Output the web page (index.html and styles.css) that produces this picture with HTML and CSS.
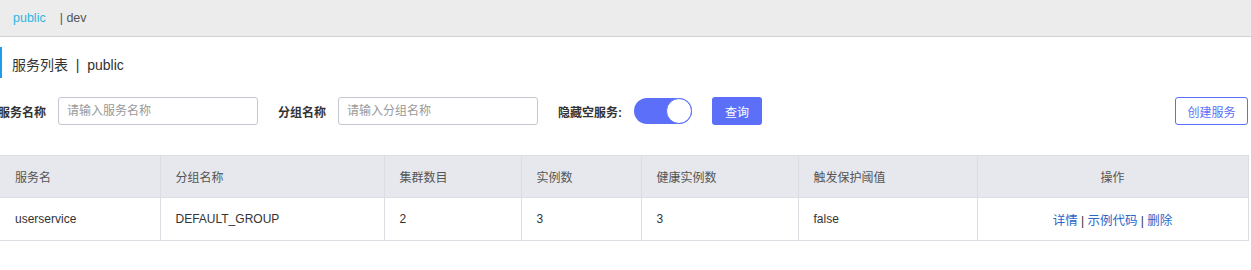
FILE: index.html
```html
<!DOCTYPE html>
<html>
<head>
    <title>服务列表</title>
    <link rel="stylesheet" href="styles.css">
</head>
<body>
    <div class="topbar">
        <span class="ns active">public</span>
        <span class="ns">| dev</span>
    </div>

    <div class="page">
        <h1 class="page-title">服务列表 &nbsp;|&nbsp; public</h1>

        <div class="filters">
            <label class="flabel first">服务名称</label>
            <input class="finput" type="text" placeholder="请输入服务名称">
            <label class="flabel ml">分组名称</label>
            <input class="finput" type="text" placeholder="请输入分组名称">
            <label class="flabel ml">隐藏空服务:</label>
            <div class="switch"><span class="knob"></span></div>
            <button class="btn-primary">查询</button>
            <div class="spacer"></div>
            <button class="btn-outline">创建服务</button>
        </div>

        <table class="grid">
            <colgroup>
                <col style="width:160px">
                <col style="width:224px">
                <col style="width:137px">
                <col style="width:120px">
                <col style="width:157px">
                <col style="width:179px">
                <col style="width:271px">
            </colgroup>
            <thead>
                <tr>
                    <th>服务名</th>
                    <th>分组名称</th>
                    <th>集群数目</th>
                    <th>实例数</th>
                    <th>健康实例数</th>
                    <th>触发保护阈值</th>
                    <th class="center">操作</th>
                </tr>
            </thead>
            <tbody>
                <tr>
                    <td>userservice</td>
                    <td>DEFAULT_GROUP</td>
                    <td>2</td>
                    <td>3</td>
                    <td>3</td>
                    <td>false</td>
                    <td class="center">
                        <a href="#">详情</a> <span class="sep">|</span> <a href="#">示例代码</a> <span class="sep">|</span> <a href="#">删除</a>
                    </td>
                </tr>
            </tbody>
        </table>
    </div>
</body>
</html>
```

FILE: styles.css
```css
body { margin: 0; font-family: "Liberation Sans", "Noto Sans CJK SC", sans-serif; color: #333; background: #fff; }

.topbar { height: 37px; background: #ececec; border-bottom: 1px solid #d3d3d3; box-sizing: border-box; display: flex; align-items: center; padding-left: 13px; font-size: 12.5px; }
.ns { color: #555; margin-right: 14px; }
.ns.active { color: #2fb5e0; }

.page { width: 1248px; }
.page-title { margin: 10px 0 0; height: 25px; padding-top: 6px; line-height: 25px; border-left: 2px solid #1e9bea; padding-left: 10px; font-size: 14px; font-weight: normal; color: #333; }

.filters { display: flex; align-items: center; margin-top: 19px; height: 28px; }
.flabel { font-size: 12px; font-weight: bold; color: #333; margin-right: 12px; white-space: nowrap; }
.flabel.first { margin-left: -2px; }
.flabel.ml { margin-left: 20px; }
.finput { width: 200px; height: 28px; box-sizing: border-box; border: 1px solid #c4c6cf; border-radius: 3px; padding: 0 8px; font-size: 12px; font-family: inherit; }
.finput::placeholder { color: #999; }

.switch { width: 58px; height: 26px; background: #5b6ff8; border-radius: 13px; position: relative; flex-shrink: 0; }
.knob { position: absolute; right: 0; top: 0; width: 24px; height: 24px; border-radius: 50%; background: #fff; border: 1px solid #5b6ff8; }

.btn-primary { margin-left: 20px; width: 50px; height: 28px; background: #5b6ff8; color: #fff; border: none; border-radius: 3px; font-size: 12px; font-family: inherit; }
.spacer { flex: 1; }
.btn-outline { width: 73px; height: 28px; background: #fff; color: #5b6ff8; border: 1px solid #5b6ff8; border-radius: 3px; font-size: 12px; font-family: inherit; }

.grid { width: 1248px; border-collapse: collapse; table-layout: fixed; margin-top: 30px; font-size: 12px; }
.grid th, .grid td { border: 1px solid #dcdde2; padding: 0 15px; text-align: left; }
.grid th:first-child, .grid td:first-child { border-left: none; }
.grid th { height: 41px; background: #e6e8ed; font-weight: normal; color: #555; }
.grid td { height: 42px; color: #333; }
.grid .center { text-align: center; }
.grid a { color: #2a66c9; text-decoration: none; font-size: 12.5px; }
.sep { color: #333; }
```
